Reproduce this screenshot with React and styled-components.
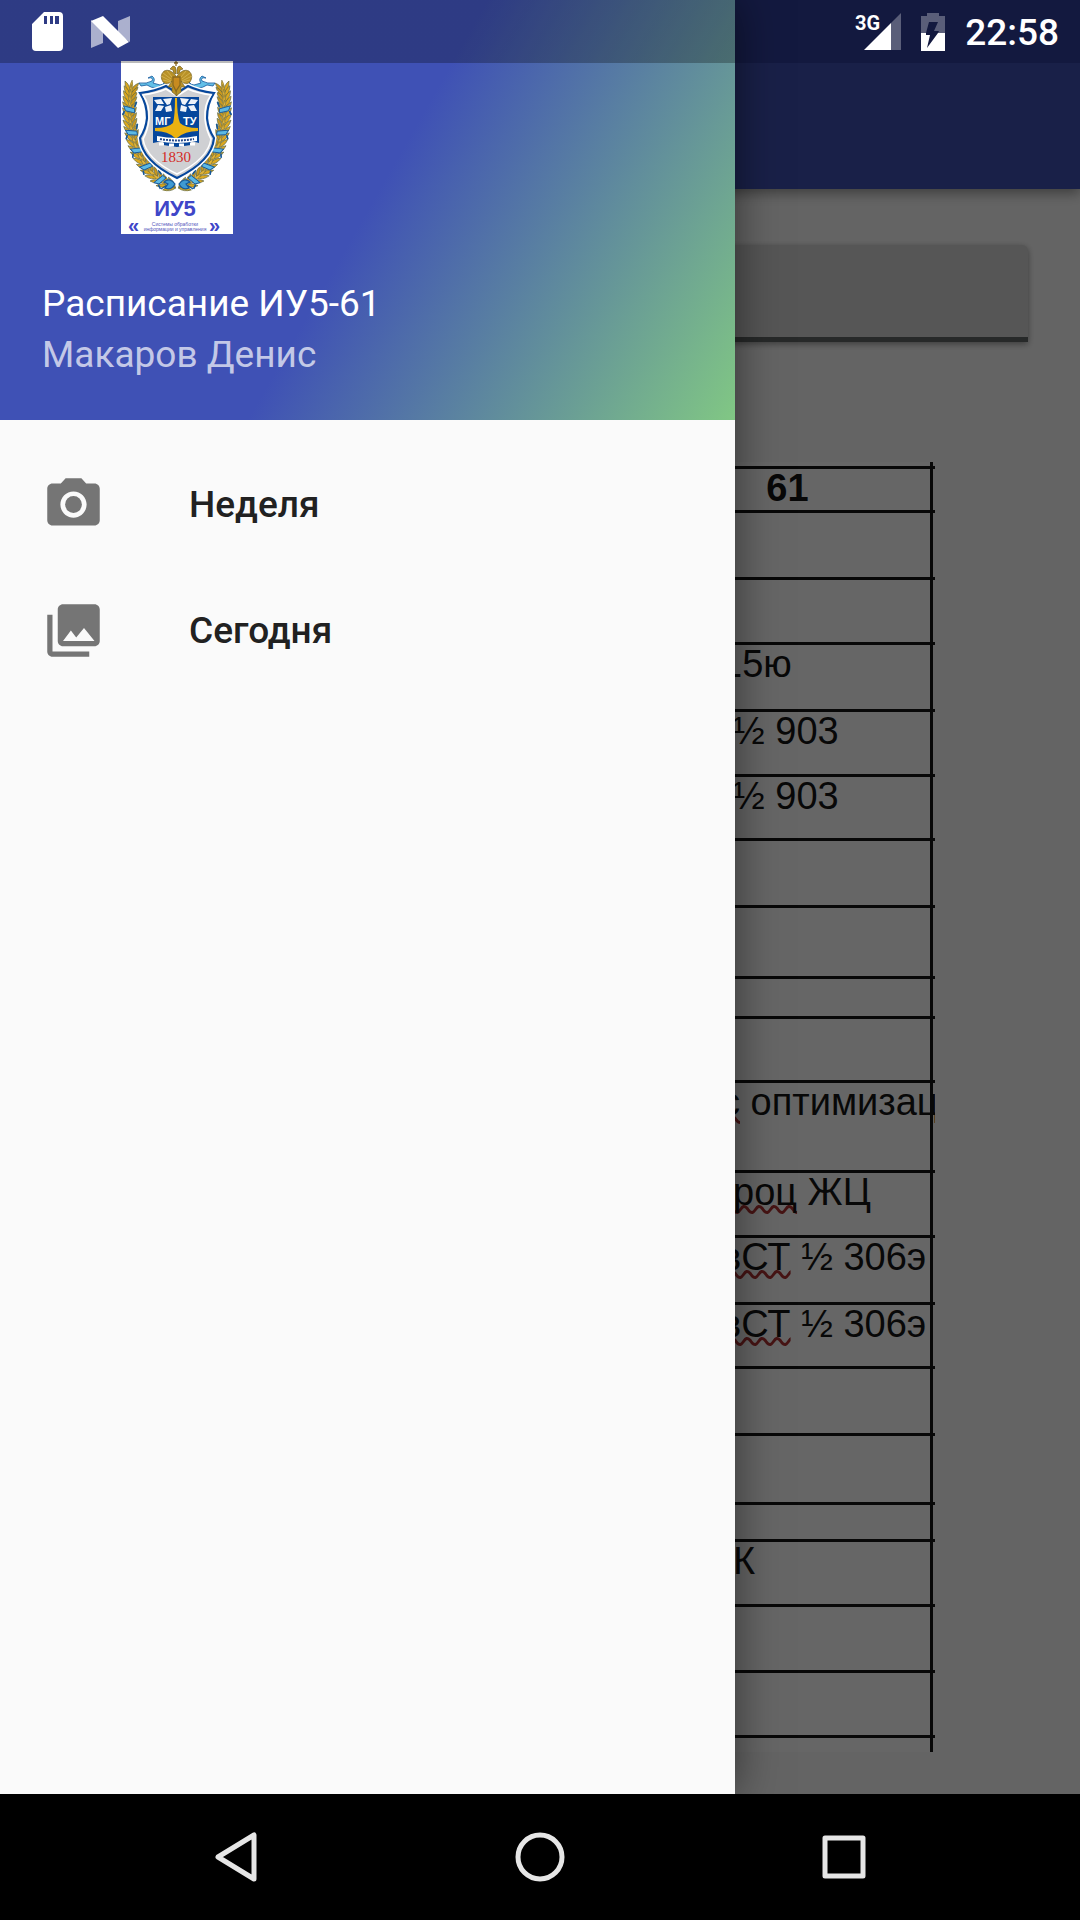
import React from "react";
import styled, { createGlobalStyle } from "styled-components";

const GlobalStyle = createGlobalStyle`
  *, *::before, *::after { box-sizing: border-box; }
  body {
    margin: 0;
    background: #000;
    font-family: Roboto, "Noto Sans", sans-serif;
  }
`;

const Screen = styled.div`
  display: flex;
  flex-direction: column;
  min-height: 100vh;
`;

/* Every layer of the window shares the single grid cell. */
const Window = styled.div`
  flex: 1;
  display: grid;
  grid-template: minmax(0, 1fr) / minmax(0, 1fr);
  overflow: hidden;
  > * { grid-area: 1 / 1; }
`;

const Page = styled.div`
  display: flex;
  flex-direction: column;
  background: #fafafa;
`;

const AppBar = styled.header`
  height: 189px;
  border-top: 63px solid #303f9f;
  background: #3f51b5;
  box-shadow: 0 4px 12px rgba(0, 0, 0, 0.4);
`;

const Content = styled.main`
  display: flex;
  flex-direction: column;
  gap: 120px;
  padding: 56px 52px 40px;
`;

const GroupField = styled.input`
  width: 100%;
  height: 97px;
  padding: 0 24px;
  border: 0;
  border-bottom: 5px solid #626666;
  border-radius: 6px 6px 0 0;
  background: #d6d6d6;
  box-shadow: 0 2px 6px rgba(0, 0, 0, 0.4);
  font: 37px Roboto, sans-serif;
`;

const Sheet = styled.div`
  align-self: flex-end;
  width: 293px;
  margin-right: 95px;
  padding-top: 4px;
  border-right: 3px solid #141414;
  background: #fff;
`;

const Timetable = styled.table`
  width: calc(100% + 5px);
  table-layout: fixed;
  border-collapse: separate;
  border-spacing: 0;
  font: 38px/38px "Liberation Sans", Arial, sans-serif;
  color: #141414;
`;

const Cell = styled.td`
  height: ${(p) => p.$height}px;
  padding: 0 0 0 ${(p) => (p.$wide ? 81 : 93)}px;
  border-top: 3px solid #141414;
  vertical-align: top;
  text-align: left;
  white-space: nowrap;
  overflow: hidden;
`;

const GroupCell = styled.th`
  height: 44px;
  padding: 0;
  border-top: 3px solid #141414;
  vertical-align: top;
  text-align: center;
  font-weight: 700;
`;

const Misspelt = styled.span`
  text-decoration: underline wavy #b03434 3px;
  text-decoration-skip-ink: none;
  text-underline-offset: 0;
`;

const Scrim = styled.div`
  background: rgba(0, 0, 0, 0.6);
`;

const Drawer = styled.aside`
  width: 735px;
  max-width: 100%;
  background: #fafafa;
  box-shadow: 0 0 42px rgba(0, 0, 0, 0.5);
`;

const DrawerHeader = styled.div`
  display: flex;
  flex-direction: column;
  height: 420px;
  padding: 61px 42px 0;
  background:
    linear-gradient(rgba(0, 0, 0, 0.27), rgba(0, 0, 0, 0.27)) 0 0 / 100% 63px no-repeat,
    linear-gradient(119.75deg, #3f51b5 50%, #81c784 100%);
  color: #fff;
`;

const Crest = styled.svg`
  display: block;
  width: 112px;
  height: 173px;
  margin: 0 0 44px 79px;
  overflow: visible;
`;

const HeaderLine = styled.div`
  font-size: 37px;
  line-height: 51px;
  color: ${(p) => (p.$muted ? "rgba(255, 255, 255, 0.7)" : "#fff")};
`;

const Menu = styled.nav`
  display: flex;
  flex-direction: column;
  padding: 21px 0;
`;

const MenuLink = styled.a`
  display: flex;
  align-items: center;
  gap: 84px;
  height: 126px;
  padding: 0 42px;
  font-size: 37px;
  font-weight: 500;
  color: #212121;
  text-decoration: none;
  svg { width: 63px; height: 63px; fill: #757575; }
`;

const StatusBar = styled.div`
  display: flex;
  justify-content: space-between;
  align-self: start;
  height: 63px;
  padding: 0 21px 0 32px;
  color: #fff;
`;

const StatusGroup = styled.div`
  display: flex;
  align-items: center;
  gap: ${(p) => p.$gap}px;
  svg { display: block; }
`;

const Signal = styled.div`
  display: flex;
  align-items: flex-start;
  font-size: 20px;
  font-weight: 700;
  line-height: 20px;
  svg { margin-left: -16px; }
`;

const Clock = styled.time`
  font-size: 37px;
  line-height: 60px;
  padding-top: 3px;
  font-weight: 500;
`;

const SystemBar = styled.footer`
  display: flex;
  justify-content: center;
  height: 126px;
  background: #000;
`;

const SystemButton = styled.button`
  display: flex;
  flex: 0 1 304px;
  align-items: center;
  justify-content: center;
  padding: 0;
  border: 0;
  background: none;
  svg { width: 56px; height: 56px; fill: none; stroke: #e6e6e6; stroke-width: 5; stroke-linejoin: round; }
`;

const rows = [
  { height: 67 },
  { height: 65 },
  { height: 67, text: "15ю", wide: true },
  { height: 65, text: "½ 903" },
  { height: 64, text: "½ 903" },
  { height: 67 },
  { height: 71 },
  { height: 40 },
  { height: 64 },
  { height: 90, marked: "с", text: " оптимизац", wide: true },
  { height: 65, marked: "роц", text: " ЖЦ" },
  { height: 67, marked: "вСТ", text: " ½ 306э", wide: true },
  { height: 64, marked: "вСТ", text: " ½ 306э", wide: true },
  { height: 67 },
  { height: 69 },
  { height: 37 },
  { height: 65, text: "К" },
  { height: 66 },
  { height: 65 },
  { height: 17 },
];

/* Leaves follow one cubic curve from the top of the wreath to its knot. */
const stem = [[10, 27], [6, 54], [8, 106], [50, 125]];
const LEAF_COUNT = 20;
const leaves = Array.from({ length: LEAF_COUNT }, (_, i) => {
  const t = i / (LEAF_COUNT - 1);
  const u = 1 - t;
  const at = (k) =>
    u * u * u * stem[0][k] + 3 * u * u * t * stem[1][k] + 3 * u * t * t * stem[2][k] + t * t * t * stem[3][k];
  const slope = (k) =>
    u * u * (stem[1][k] - stem[0][k]) + 2 * u * t * (stem[2][k] - stem[1][k]) + t * t * (stem[3][k] - stem[2][k]);
  return { x: at(0), y: at(1), deg: (Math.atan2(slope(1), slope(0)) * 180) / Math.PI - 90 };
});

function WreathHalf() {
  return (
    <g>
      {leaves.map((l, i) => (
        <g key={i} transform={`translate(${l.x} ${l.y}) rotate(${l.deg})`}>
          <path d="M0 5Q-6 2-7-6Q-1-3 0 5Z" fill="#dca81f" stroke="#56633f" strokeWidth=".6" />
          <path d="M0 5Q6 1 7-6Q1-3 0 5Z" fill="#c9981f" stroke="#56633f" strokeWidth=".6" />
          <path d="M0 4Q-3-2 0-8Q3-2 0 4Z" fill="#e3b437" stroke="#6b6a3a" strokeWidth=".5" />
        </g>
      ))}
      {[4, 8, 11, 14, 17].map((i) => (
        <g key={i} transform={`translate(${leaves[i].x} ${leaves[i].y}) rotate(${leaves[i].deg})`}>
          <path d="M-6-2L5 1L5 5L-4 3Z" fill="#5cb9e4" stroke="#14589c" strokeWidth=".9" />
          <path d="M-5 3L-7 7M5-1L7-6" stroke="#14589c" strokeWidth="1.6" />
        </g>
      ))}
      <path d="M43 121Q49 116 54 123Q50 130 44 127L47 123ZM40 128L46 124" fill="#3f9ad2" stroke="#14589c" strokeWidth="1.2" />
      <path d="M18 22Q26 23 31 20Q33 16 27 17L31 15Q35 18 32 22L39 24Q42 24 44 21Q42 27 36 27Q30 27 26 24L20 25Z" fill="#62bfe7" stroke="#14589c" strokeWidth=".8" />
    </g>
  );
}

function EagleHalf() {
  return (
    <g fill="#b99227" stroke="#6a5a24" strokeWidth=".6">
      <path d="M55 15Q49 7 43 10Q38 15 42 21Q46 25 51 20L47 26L51 26L51 31L56 35Z" />
      <path d="M42 12L50 18M40 15L50 20M42 19L50 21M46 10L51 16" fill="none" stroke="#e0c56a" />
      <path d="M55 13Q52 13 52 9L49 8L52 5Q55 5 55 9Z" />
    </g>
  );
}

const shield =
  "M19 32Q35 30 45 25L56 32L67 25Q77 30 93 32Q86 43 86 57Q87 68 93 77Q91 100 56 117Q21 100 19 77Q25 68 26 57Q26 43 19 32Z";

function DepartmentCrest() {
  return (
    <Crest viewBox="0 0 112 173" role="img" aria-label="ИУ5">
      <rect width="112" height="173" fill="#fff" />
      <WreathHalf />
      <g transform="translate(112 0) scale(-1 1)"><WreathHalf /></g>
      <path d={shield} fill="#cfd0d3" stroke="#fff" strokeWidth="5" />
      <path d={shield} fill="#cfd0d3" stroke="#06479c" strokeWidth="2.2" />
      <path d="M22 34Q36 32 45 28L56 35L67 28Q76 32 90 34Q83 44 84 58Q85 69 90 78Q87 98 56 113Q25 98 22 78Q27 69 28 58Q29 44 22 34Z" fill="none" stroke="#fff" strokeWidth="1.6" />
      <EagleHalf />
      <g transform="translate(111 0) scale(-1 1)"><EagleHalf /></g>
      <path d="M55 0V5M53 2H57M52 16H59V24L55 30L52 24Z" fill="#c78b20" stroke="#8a6a1f" strokeWidth="1.3" />
      <path d="M32 36H78V82L70 80V84L56 86L42 84V80L32 82Z" fill="#06479c" />
      <path d="M33 39L40 38L43 43L36 43ZM42 38L51 37L49 43L46 44ZM34 50L37 44L43 45L40 50ZM44 46L50 44L51 50L45 51ZM77 39L70 38L67 43L74 43ZM68 38L59 37L61 43L64 44ZM76 50L73 44L67 45L70 50ZM66 46L60 44L59 50L65 51Z" fill="#eef2f8" />
      <path d="M36 75Q56 79 76 75V80Q56 84 36 80Z" fill="#fff" />
      <path d="M38 83H43M48 84H53M58 84H63M69 83H74" stroke="#fff" strokeWidth="3" />
      <path d="M54 37H56Q56 55 59 62Q64 67 77 67V70Q64 70 56 77H54Q47 70 34 70V67Q47 67 52 62Q54 55 54 37Z" fill="#eab211" />
      <g fontFamily="Liberation Sans, Arial, sans-serif" fontWeight="700">
        <text x="34" y="64" fontSize="11" fill="#fff">МГ</text>
        <text x="62" y="64" fontSize="11" fill="#fff">ТУ</text>
        <text x="54" y="155" fontSize="22" fill="#3f46c8" textAnchor="middle">ИУ5</text>
        <text x="7" y="171" fontSize="20" fill="#3f46c8">«</text>
        <text x="88" y="171" fontSize="20" fill="#3f46c8">»</text>
      </g>
      <path d="M39 78Q56 81 73 78" fill="none" stroke="#23498c" strokeWidth="2" strokeDasharray="2 1" />
      <text x="55" y="101" fontFamily="Liberation Serif, serif" fontSize="15" fill="#d32a25" textAnchor="middle">1830</text>
      <g fontFamily="Liberation Sans, Arial, sans-serif" fontSize="5" fill="#5558bd" textAnchor="middle">
        <text x="54" y="165">Системы обработки</text>
        <text x="54" y="170">информации и управления</text>
      </g>
      <rect width="112" height="2" fill="#000" opacity=".27" />
    </Crest>
  );
}

function StatusIcons() {
  return (
    <StatusBar>
      <StatusGroup $gap={28}>
        <svg width="31" height="39" viewBox="0 0 31 39">
          <path fill="#fff" fillRule="evenodd" d="M12 0H27Q31 0 31 4V35Q31 39 27 39H4Q0 39 0 35V12ZM12 4V12H15V4ZM18 4V12H21V4ZM23 4V12H27V4Z" />
        </svg>
        <svg width="39" height="32" viewBox="0 0 39 32">
          <path fill="#fff" opacity=".6" d="M0 4L12 12V27L0 32ZM27 5L39 0V26L27 18Z" />
          <path fill="#fff" d="M0 5L12 0L38 26L27 32Z" />
        </svg>
      </StatusGroup>
      <StatusGroup $gap={20}>
        <Signal>
          <span>3G</span>
          <svg width="37" height="37" viewBox="0 0 37 37">
            <path fill="#fff" opacity=".3" d="M27 10L37 0V37H27Z" />
            <path fill="#fff" d="M0 37L27 10V37Z" />
          </svg>
        </Signal>
        <svg width="24" height="38" viewBox="0 0 24 38">
          <path fill="#fff" opacity=".3" fillRule="evenodd" d="M6 0H18V3H24V20H17L18 18H13L17 9H8L5 20H0V3H6Z" />
          <path fill="#fff" fillRule="evenodd" d="M0 20H5L5 22H9L6 35L17 20H24V38H0Z" />
        </svg>
        <Clock>22:58</Clock>
      </StatusGroup>
    </StatusBar>
  );
}

export default function App() {
  return (
    <Screen>
      <GlobalStyle />
      <Window>
        <Page>
          <AppBar />
          <Content>
            <GroupField aria-label="Группа" />
            <Sheet>
              <Timetable>
                <thead>
                  <tr><GroupCell scope="col">61</GroupCell></tr>
                </thead>
                <tbody>
                  {rows.map((row, i) => (
                    <tr key={i}>
                      <Cell $height={row.height} $wide={row.wide}>
                        {row.marked && <Misspelt>{row.marked}</Misspelt>}
                        {row.text}
                      </Cell>
                    </tr>
                  ))}
                </tbody>
              </Timetable>
            </Sheet>
          </Content>
        </Page>
        <Scrim />
        <Drawer>
          <DrawerHeader>
            <DepartmentCrest />
            <HeaderLine>Расписание ИУ5-61</HeaderLine>
            <HeaderLine $muted>Макаров Денис</HeaderLine>
          </DrawerHeader>
          <Menu>
            <MenuLink href="#week">
              <svg viewBox="0 0 24 24">
                <circle cx="12" cy="12" r="3.2" />
                <path d="M9 2L7.17 4H4c-1.1 0-2 .9-2 2v12c0 1.1.9 2 2 2h16c1.1 0 2-.9 2-2V6c0-1.1-.9-2-2-2h-3.17L15 2H9zm3 15c-2.76 0-5-2.24-5-5s2.24-5 5-5 5 2.24 5 5-2.24 5-5 5z" />
              </svg>
              Неделя
            </MenuLink>
            <MenuLink href="#today">
              <svg viewBox="0 0 24 24">
                <path d="M22 16V4c0-1.1-.9-2-2-2H8c-1.1 0-2 .9-2 2v12c0 1.1.9 2 2 2h12c1.1 0 2-.9 2-2zm-11-4l2.03 2.71L16 11l4 5H8l3-4zM2 6v14c0 1.1.9 2 2 2h14v-2H4V6H2z" />
              </svg>
              Сегодня
            </MenuLink>
          </Menu>
        </Drawer>
        <StatusIcons />
      </Window>
      <SystemBar>
        <SystemButton aria-label="Назад">
          <svg viewBox="0 0 56 56"><path d="M46 6V50L10 28Z" /></svg>
        </SystemButton>
        <SystemButton aria-label="Домой">
          <svg viewBox="0 0 56 56"><circle cx="28" cy="28" r="22" /></svg>
        </SystemButton>
        <SystemButton aria-label="Обзор">
          <svg viewBox="0 0 56 56"><rect x="9" y="9" width="38" height="38" /></svg>
        </SystemButton>
      </SystemBar>
    </Screen>
  );
}
